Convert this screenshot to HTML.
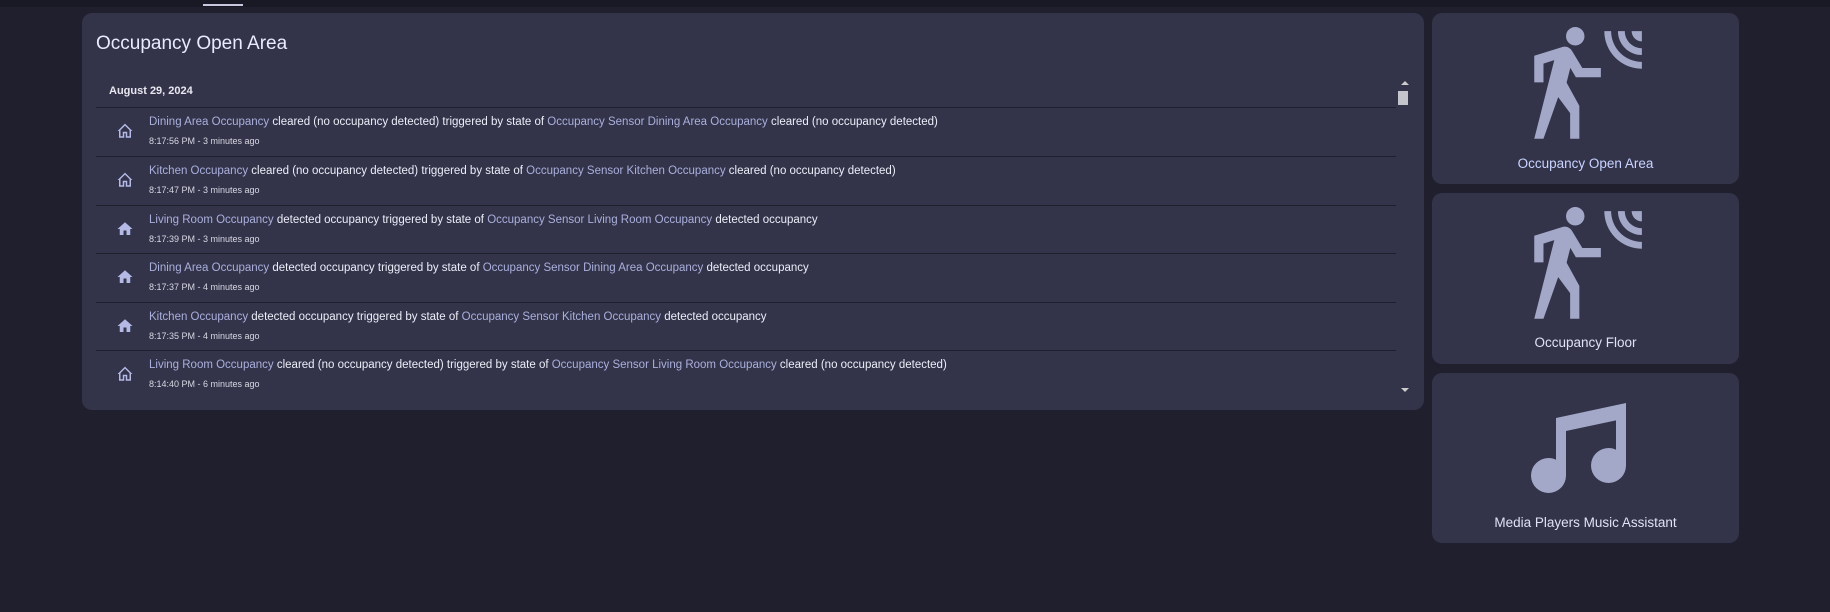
<!DOCTYPE html>
<html><head><meta charset="utf-8"><style>
*{margin:0;padding:0;box-sizing:border-box}
body{width:1830px;height:612px;background:#1f1f2d;font-family:"Liberation Sans",sans-serif;position:relative;overflow:hidden}
.top{position:absolute;left:0;top:0;width:1830px;height:7px;background:#191926}
.tab{position:absolute;left:203px;top:4px;width:40px;height:2px;background:#c8c8e0}
.card{position:absolute;background:#33334a;border-radius:10px}
.title{position:absolute;left:14px;top:20px;font-size:19px;color:#e8ebff}
.date{position:absolute;left:27px;top:72px;font-size:11px;font-weight:bold;color:#e8e8f0}
.row{position:absolute;left:14px;width:1300px;height:49px;border-top:1px solid #1f1f2d}
.row svg{position:absolute;left:20px;top:14px}
.l1{position:absolute;left:53px;top:8px;font-size:11.5px;color:#eceef8;white-space:nowrap}
.l1 a{color:#aab0dc}
.l2{position:absolute;left:53px;top:28px;font-size:9px;color:#d8d8e4}
.lbl{position:absolute;left:0;width:100%;text-align:center;font-size:13.5px;color:#dfe2f5}
</style></head><body>
<div class="top"></div><div class="tab"></div>
<div class="card" style="left:82px;top:13px;width:1342px;height:397px">
<div class="title">Occupancy Open Area</div>
<div class="date">August 29, 2024</div>
<div style="position:absolute;left:1319px;top:68px;width:0;height:0;border-left:4px solid transparent;border-right:4px solid transparent;border-bottom:4px solid #ccc"></div>
<div style="position:absolute;left:1316px;top:78px;width:10px;height:14px;background:#c4c4cc"></div>
<div style="position:absolute;left:1319px;top:375px;width:0;height:0;border-left:4px solid transparent;border-right:4px solid transparent;border-top:4px solid #ccc"></div>
<div style="position:absolute;left:14px;top:94px;width:1300px;height:300px;overflow:hidden">
<div class="row" style="left:0;top:0"><svg width="18" height="18" viewBox="0 0 24 24"><path fill="#b4b9e6" d="M9,19V13H11L13,13H15V19H18V10.91L12,4.91L6,10.91V19H9M12,2.09L21.91,12H20V21H13V15H11V21H4V12H2.09L12,2.09Z"/></svg><div class="l1"><a>Dining Area Occupancy</a> cleared (no occupancy detected) triggered by state of <a>Occupancy Sensor Dining Area Occupancy</a> cleared (no occupancy detected)</div><div class="l2">8:17:56 PM - 3 minutes ago</div></div>
<div class="row" style="left:0;top:49px"><svg width="18" height="18" viewBox="0 0 24 24"><path fill="#b4b9e6" d="M9,19V13H11L13,13H15V19H18V10.91L12,4.91L6,10.91V19H9M12,2.09L21.91,12H20V21H13V15H11V21H4V12H2.09L12,2.09Z"/></svg><div class="l1"><a>Kitchen Occupancy</a> cleared (no occupancy detected) triggered by state of <a>Occupancy Sensor Kitchen Occupancy</a> cleared (no occupancy detected)</div><div class="l2">8:17:47 PM - 3 minutes ago</div></div>
<div class="row" style="left:0;top:98px"><svg width="18" height="18" viewBox="0 0 24 24"><path fill="#b4b9e6" d="M10,20V14H14V20H19V12H22L12,3L2,12H5V20H10Z"/></svg><div class="l1"><a>Living Room Occupancy</a> detected occupancy triggered by state of <a>Occupancy Sensor Living Room Occupancy</a> detected occupancy</div><div class="l2">8:17:39 PM - 3 minutes ago</div></div>
<div class="row" style="left:0;top:146px"><svg width="18" height="18" viewBox="0 0 24 24"><path fill="#b4b9e6" d="M10,20V14H14V20H19V12H22L12,3L2,12H5V20H10Z"/></svg><div class="l1"><a>Dining Area Occupancy</a> detected occupancy triggered by state of <a>Occupancy Sensor Dining Area Occupancy</a> detected occupancy</div><div class="l2">8:17:37 PM - 4 minutes ago</div></div>
<div class="row" style="left:0;top:195px"><svg width="18" height="18" viewBox="0 0 24 24"><path fill="#b4b9e6" d="M10,20V14H14V20H19V12H22L12,3L2,12H5V20H10Z"/></svg><div class="l1"><a>Kitchen Occupancy</a> detected occupancy triggered by state of <a>Occupancy Sensor Kitchen Occupancy</a> detected occupancy</div><div class="l2">8:17:35 PM - 4 minutes ago</div></div>
<div class="row" style="left:0;top:243px"><svg width="18" height="18" viewBox="0 0 24 24"><path fill="#b4b9e6" d="M9,19V13H11L13,13H15V19H18V10.91L12,4.91L6,10.91V19H9M12,2.09L21.91,12H20V21H13V15H11V21H4V12H2.09L12,2.09Z"/></svg><div class="l1"><a>Living Room Occupancy</a> cleared (no occupancy detected) triggered by state of <a>Occupancy Sensor Living Room Occupancy</a> cleared (no occupancy detected)</div><div class="l2">8:14:40 PM - 6 minutes ago</div></div>
</div>
</div>
<div class="card" style="left:1432px;top:13px;width:307px;height:171px">
<svg style="position:absolute;left:92px;top:13px" width="123" height="123" viewBox="0 0 24 24"><path fill="#a3a8c8" d="M10,0.2C9,0.2 8.2,1 8.2,2C8.2,3 9,3.8 10,3.8C11,3.8 11.8,3 11.8,2C11.8,1 11,0.2 10,0.2M15.67,1A7.33,7.33 0 0,0 23,8.33V7A6,6 0 0,1 17,1H15.67M18.33,1C18.33,3.58 20.42,5.67 23,5.67V4.33C21.16,4.33 19.67,2.84 19.67,1H18.33M21,1A2,2 0 0,0 23,3V1H21M7.92,4.03C7.750,4.03 7.58,4.06 7.42,4.11L2,5.8V11H3.8V7.33L5.91,6.67L2,22H3.8L6.670,13.89L9,17V22H10.8V15.59L8.31,11.05L9.04,8.18L10.12,10H15V8.2H11.38L9.38,4.87C9.08,4.37 8.54,4.03 7.920,4.03Z"/></svg>
<div class="lbl" style="top:143px;color:#c8d4ff">Occupancy Open Area</div></div>
<div class="card" style="left:1432px;top:193px;width:307px;height:171px">
<svg style="position:absolute;left:92px;top:13px" width="123" height="123" viewBox="0 0 24 24"><path fill="#a3a8c8" d="M10,0.2C9,0.2 8.2,1 8.2,2C8.2,3 9,3.8 10,3.8C11,3.8 11.8,3 11.8,2C11.8,1 11,0.2 10,0.2M15.67,1A7.33,7.33 0 0,0 23,8.33V7A6,6 0 0,1 17,1H15.67M18.33,1C18.33,3.58 20.42,5.67 23,5.67V4.33C21.16,4.33 19.67,2.84 19.67,1H18.33M21,1A2,2 0 0,0 23,3V1H21M7.92,4.03C7.750,4.03 7.58,4.06 7.42,4.11L2,5.8V11H3.8V7.33L5.91,6.67L2,22H3.8L6.670,13.89L9,17V22H10.8V15.59L8.31,11.05L9.04,8.18L10.12,10H15V8.2H11.38L9.38,4.87C9.08,4.37 8.54,4.03 7.920,4.03Z"/></svg>
<div class="lbl" style="top:142px">Occupancy Floor</div></div>
<div class="card" style="left:1432px;top:373px;width:307px;height:170px">
<svg style="position:absolute;left:89px;top:15px" width="120" height="120" viewBox="0 0 24 24"><path fill="#a3a8c8" d="M21,3V15.5A3.5,3.5 0 0,1 17.5,19A3.5,3.5 0 0,1 14,15.5A3.5,3.5 0 0,1 17.5,12C18.04,12 18.55,12.12 19,12.34V6.47L9,8.6V17.5A3.5,3.5 0 0,1 5.5,21A3.5,3.5 0 0,1 2,17.5A3.5,3.5 0 0,1 5.5,14C6.04,14 6.55,14.12 7,14.34V6L21,3Z"/></svg>
<div class="lbl" style="top:142px">Media Players Music Assistant</div></div>
</body></html>
